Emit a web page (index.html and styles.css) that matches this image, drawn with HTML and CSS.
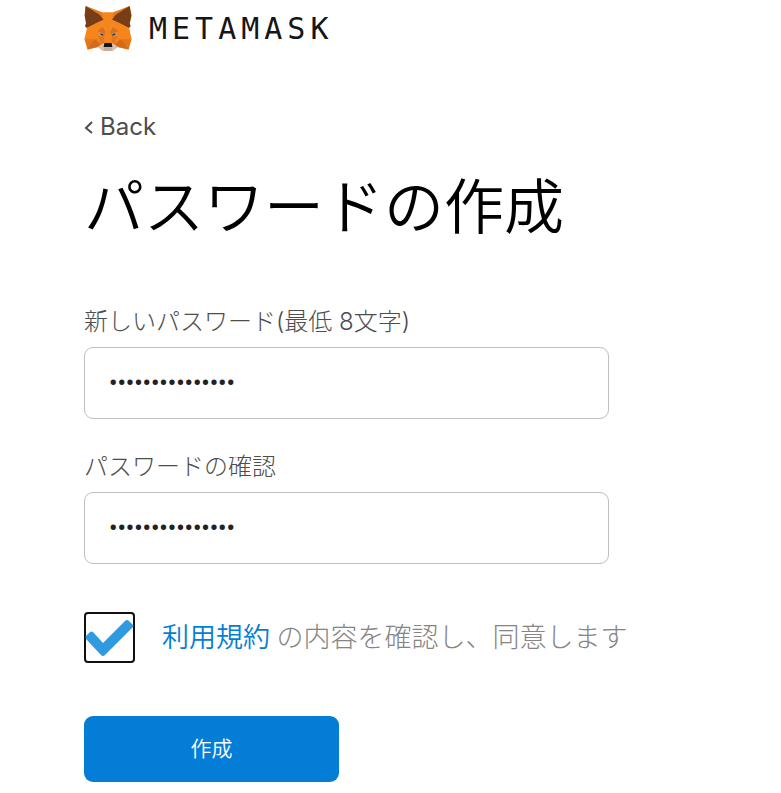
FILE: index.html
```html
<!DOCTYPE html>
<html lang="ja">
<head>
  <meta charset="UTF-8" />
  <meta name="viewport" content="width=device-width, initial-scale=1.0" />
  <title>MetaMask</title>
  <link rel="stylesheet" href="styles.css">
</head>
<body>
  <div class="page">
    <header class="logo">
      <svg class="logo-fox" viewBox="31 17 144 138" aria-hidden="true">
        <!-- head -->
        <path fill="#f18a26" d="M36 17 80 36h44l44-19 6 27-8 38 8 35-9 31-33-8-16 12H88l-15-12-31 8-10-31 9-35-8-38z"/>
        <path fill="#e27a20" d="M36 17 85 36l4 20-11-13zM168 17l-49 19-4 20 11-13z"/>
        <!-- ears -->
        <path fill="#763d16" d="M36 17 78 43 90 58 68 68 39 83 34 78 37 68 33 46z"/>
        <path fill="#763d16" d="M168 17 126 43 115 58 137 68 166 83 171 78 168 68 173 46z"/>
        <!-- cheeks -->
        <path fill="#f6851b" d="M40 83 88 59 76 93 73 117H34zM166 83 117 59l12 34 3 24h40z"/>
        <path fill="#e4761b" d="M34 117h39l-4 19-27 11zM171 117h-39l4 19 28 11z"/>
        <path fill="#d66a1a" d="m62 117 20 14-9 9-31 7zM143 117l-20 14 9 9 32 7z"/>
        <!-- brow and bridge -->
        <path fill="#d9711e" d="m72 92 15-12 9 16-5 13zM134 92l-16-12-9 16 6 13z"/>
        <path fill="#f6851b" d="M89 38h27l-7 52 5 40H91l5-40z"/>
        <path fill="#e4761b" d="m73 106 19 4-1 20-9 1zM132 106l-19 4 1 20 9 1z"/>
        <!-- eyes -->
        <path fill="#c0ad9e" d="m76 96 12 3 4 8-13-2zM129 96l-12 3-4 8 14-2z"/>
        <path fill="#233447" d="m80 99 8 2 2 5-9-2zM125 99l-8 2-2 5 10-2z"/>
        <!-- muzzle -->
        <path fill="#d7c1b3" d="m73 139 18-11h24l17 11-16 13H88z"/>
        <path fill="#c0ad9e" d="M90 141h26l-3 11H92z"/>
        <path fill="#161616" d="M92 128h22l2 12H90z"/>
      </svg>
      <span class="logo-name">METAMASK</span>
    </header>

    <main>
      <a class="back" href="#">
        <svg class="back-arrow" viewBox="0 0 9 14" aria-hidden="true">
          <path d="M8 2 2 8l6 5" fill="none" stroke="#4d4d4d" stroke-width="2"/>
        </svg>
        Back
      </a>
      <h1 class="title">パスワードの作成</h1>

      <form class="form">
        <div class="field">
          <label class="field-label" for="password">新しいパスワード(最低 8文字)</label>
          <input class="field-input" type="password" id="password" value="metamaskwallet1">
        </div>
        <div class="field">
          <label class="field-label" for="confirm">パスワードの確認</label>
          <input class="field-input" type="password" id="confirm" value="metamaskwallet1">
        </div>

        <div class="terms">
          <div class="check">
            <input class="check-input" type="checkbox" id="agree" checked>
            <svg class="check-mark" viewBox="0 0 51 51" aria-hidden="true">
              <path fill="#2f9ae0" d="M2 24 6 20q1-1 3 0l10 11L41 9q2-2 4 0l4 4q1 1 0 2L21 43q-2 2-4 0L2 27q-1-2 0-3z"/>
            </svg>
          </div>
          <label class="terms-text" for="agree"><a class="terms-link" href="#">利用規約</a> の内容を確認し、同意します</label>
        </div>

        <button class="submit" type="button">作成</button>
      </form>
    </main>
  </div>
</body>
</html>
```

FILE: styles.css
```css
* {
  box-sizing: border-box;
}
body {
  margin: 0;
  background: #fff;
  color: #000;
  font-family: Roboto, "Noto Sans CJK JP", sans-serif;
  font-weight: 300;
}
a {
  text-decoration: none;
}
.page {
  padding: 5px 84px 11px;
}

/* Logo */
.logo {
  display: flex;
  align-items: center;
  gap: 17px;
}
.logo-fox {
  width: 48px;
  height: 46px;
}
.logo-name {
  font-family: "DejaVu Sans Mono", monospace;
  font-size: 30px;
  font-weight: 400;
  line-height: 48px;
  letter-spacing: 5px;
  color: #161616;
}

.back {
  display: flex;
  align-items: center;
  gap: 7px;
  width: fit-content;
  margin-top: 58px;
  font-family: Inter, sans-serif;
  font-size: 24px;
  font-weight: 400;
  line-height: 32px;
  color: #4d4d4d;
}
.back-arrow {
  width: 9px;
  height: 14px;
}
.title {
  margin: 34px 0 0;
  font-size: 60px;
  font-weight: 350;
  line-height: 64px;
}

/* Form */
.form {
  display: flex;
  flex-direction: column;
  align-items: flex-start;
  margin-top: 65px;
}
.field {
  display: flex;
  flex-direction: column;
  gap: 9px;
  width: 100%;
  max-width: 525px;
  margin-bottom: 32px;
}
.field-label {
  font-family: Inter, "Noto Sans CJK JP", sans-serif;
  font-size: 24px;
  line-height: 32px;
  color: #4d4d4d;
}
.field-input {
  width: 100%;
  height: 72px;
  padding: 0 24px;
  border: 1px solid #bbc0c5;
  border-radius: 9px;
  background: #fff;
  font-family: Roboto, sans-serif;
  font-size: 24px;
  font-weight: 500;
  color: #222;
}

.terms {
  display: flex;
  align-items: center;
  gap: 27px;
  margin-top: 16px;
}
.check {
  position: relative;
  width: 51px;
  height: 51px;
}
.check-input {
  appearance: none;
  display: block;
  width: 100%;
  height: 100%;
  margin: 0;
  border: 2px solid #101010;
  border-radius: 4px;
}
.check-mark {
  position: absolute;
  inset: 0;
  pointer-events: none;
}
.terms-text {
  font-size: 27px;
  line-height: 40px;
  color: #858585;
}
.terms-link {
  font-weight: 350;
  color: #037dd6;
}

.submit {
  width: 255px;
  height: 66px;
  margin-top: 53px;
  padding: 0 0 4px;
  border: none;
  border-radius: 9px;
  background: #037dd6;
  color: #fff;
  font-family: "Noto Sans CJK JP", sans-serif;
  font-size: 21px;
  font-weight: 350;
  cursor: pointer;
}
```
